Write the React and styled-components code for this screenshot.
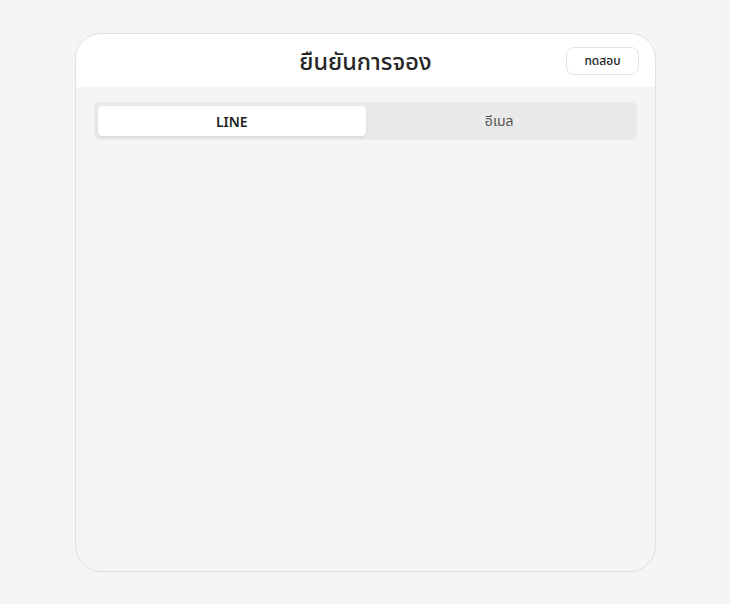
import React, { useState } from "react";
import styled, { createGlobalStyle } from "styled-components";

const GlobalStyle = createGlobalStyle`
  html, body {
    margin: 0;
    padding: 0;
    background: #f5f5f5;
    font-family: "Noto Sans", "Noto Sans Thai", "Liberation Sans", sans-serif;
  }
  * {
    box-sizing: border-box;
  }
`;

const tabs = [
  { id: "line", label: "LINE" },
  { id: "email", label: "อีเมล" },
];

export default function App() {
  const [active, setActive] = useState("line");

  return (
    <>
      <GlobalStyle />
      <Page>
        <Card>
          <Header>
            <span />
            <Title>ยืนยันการจอง</Title>
            <TestButton>ทดสอบ</TestButton>
          </Header>
          <Body>
            <Tabs>
              {tabs.map((t) => (
                <Tab
                  key={t.id}
                  $active={active === t.id}
                  onClick={() => setActive(t.id)}
                >
                  {t.label}
                </Tab>
              ))}
            </Tabs>
          </Body>
        </Card>
      </Page>
    </>
  );
}

const Page = styled.div`
  width: 730px;
  height: 604px;
  padding: 33px 0 0 75px;
`;

const Card = styled.div`
  width: 581px;
  height: 539px;
  background: #f5f5f5;
  border: 1.5px solid #e0e0e0;
  border-radius: 26px;
  overflow: hidden;
  display: flex;
  flex-direction: column;
`;

const Header = styled.div`
  height: 53px;
  background: #fff;
  display: grid;
  grid-template-columns: 1fr auto 1fr;
  align-items: center;
  padding: 0 16px 0 16px;
`;

const Title = styled.h1`
  margin: 4px 0 0;
  font-size: 23.5px;
  font-weight: 500;
  color: #262626;
`;

const TestButton = styled.button`
  justify-self: end;
  width: 73px;
  height: 28px;
  margin-top: 1px;
  background: #fff;
  border: 1.5px solid #e2e2e2;
  border-radius: 8px;
  font-family: inherit;
  font-size: 12px;
  font-weight: 500;
  color: #222;
  cursor: pointer;
`;

const Body = styled.div`
  flex: 1;
  padding: 15px 18px;
`;

const Tabs = styled.div`
  display: grid;
  grid-template-columns: 1fr 1fr;
  height: 38px;
  padding: 4px;
  background: #e9e9e9;
  border-radius: 6px;
`;

const Tab = styled.button`
  border: none;
  border-radius: 4px;
  background: ${(p) => (p.$active ? "#fff" : "transparent")};
  box-shadow: ${(p) => (p.$active ? "0 1px 3px rgba(0,0,0,0.08)" : "none")};
  font-family: inherit;
  font-size: 14px;
  font-weight: ${(p) => (p.$active ? 600 : 400)};
  color: ${(p) => (p.$active ? "#222" : "#555")};
  cursor: pointer;
`;
